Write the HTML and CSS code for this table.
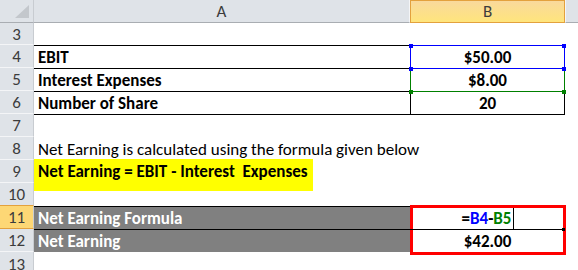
FILE: index.html
```html
<!DOCTYPE html>
<html>
<head>
<meta charset="utf-8">
<link rel="stylesheet" href="styles.css">
</head>
<body>
<div class="sheet">
  <div class="corner"><span class="tri"></span></div>
  <div class="colhead">A</div>
  <div class="colhead selcol">B</div>
  <div class="colhead lastcol"></div>

  <div class="rh">3</div><div class="c"></div><div class="c"></div><div class="c"></div>

  <div class="rh">4</div>
  <div class="c b tb">EBIT</div>
  <div class="c b ctr tb blue">$50.00
    <span class="hd hb tl"></span><span class="hd hb tr"></span>
  </div>
  <div class="c"></div>

  <div class="rh">5</div>
  <div class="c b tb">Interest Expenses</div>
  <div class="c b ctr green">$8.00
    <span class="hd hb tl"></span><span class="hd hb tr"></span>
  </div>
  <div class="c"></div>

  <div class="rh">6</div>
  <div class="c b tb">Number of Share</div>
  <div class="c b ctr greentop side">20
    <span class="hd hg tl"></span><span class="hd hg tr"></span>
  </div>
  <div class="c"></div>

  <div class="rh">7</div>
  <div class="c tb"></div>
  <div class="c tb"></div>
  <div class="c"></div>

  <div class="rh">8</div>
  <div class="c">Net Earning is calculated using the formula given below</div>
  <div class="c"></div>
  <div class="c"></div>

  <div class="rh">9</div>
  <div class="c"><div class="note">Net Earning = EBIT - Interest&nbsp; Expenses</div></div>
  <div class="c"></div>
  <div class="c"></div>

  <div class="rh">10</div>
  <div class="c"></div>
  <div class="c"></div>
  <div class="c"></div>

  <div class="rh selrow">11</div>
  <div class="c b gray tb">Net Earning Formula</div>
  <div class="c b ctr formula">=<span class="ref1">B4</span>-<span class="ref2">B5</span><span class="caret"></span>
    <span class="redbox"></span>
  </div>
  <div class="c"></div>

  <div class="rh">12</div>
  <div class="c b gray tb">Net Earning</div>
  <div class="c b ctr result">$42.00<span class="hd hk mr"></span></div>
  <div class="c"></div>

  <div class="rh">13</div>
  <div class="c"></div>
  <div class="c"></div>
  <div class="c"></div>
</div>
</body>
</html>
```

FILE: styles.css
```css
body {
  margin: 0;
  background: #ffffff;
  font-family: Carlito, Calibri, "Liberation Sans", sans-serif;
  font-size: 17px;
  color: #000;
}

.sheet {
  display: grid;
  grid-template-columns: 34px 376px 155px 13px;
  grid-template-rows: 23px 22px repeat(9, 23px) 25px;
  width: 578px;
  height: 270px;
  overflow: hidden;
}

.corner {
  box-sizing: border-box;
  background: #dfe3e8;
  border-right: 1px solid #c8ccd1;
  border-bottom: 1px solid #a9adb2;
  position: relative;
}

.tri {
  position: absolute;
  left: 15px;
  top: 5px;
  width: 14px;
  height: 13px;
  background: #c3c7cc;
  clip-path: polygon(100% 0, 100% 100%, 0 100%);
}

.colhead {
  box-sizing: border-box;
  background: #dfe3e8;
  border-right: 1px solid #f4f5f7;
  border-bottom: 1px solid #a9adb2;
  display: flex;
  align-items: center;
  justify-content: center;
  color: #3c3c3c;
  font-size: 17px;
}

.colhead.selcol {
  background: linear-gradient(#f9d99c, #ffe57c);
  border: 1px solid #e3a13d;
  color: #3c3c3c;
}

.colhead.lastcol {
  border-left: 1px solid #f4f5f7;
  border-right: none;
}

.rh {
  box-sizing: border-box;
  background: #dfe3e8;
  border-right: 1px solid #c8ccd1;
  border-bottom: 1px solid #f4f5f7;
  display: flex;
  align-items: center;
  justify-content: center;
  color: #3c3c3c;
  font-size: 17px;
  padding-top: 1px;
}

.rh.selrow {
  background: #fdd775;
  border-top: 1px solid #e3a13d;
  border-bottom: 1px solid #e3a13d;
  margin-top: -1px;
}

.c {
  box-sizing: border-box;
  display: flex;
  align-items: center;
  padding-left: 4px;
  padding-top: 1px;
  white-space: nowrap;
  position: relative;
}

.b { font-weight: bold; }

.ctr {
  justify-content: center;
  padding-left: 0;
}

.tb { border-top: 1px solid #000; }

.blue {
  border-top: 1px solid #0000ff;
  border-left: 1px solid #0000ff;
  border-right: 1px solid #0000ff;
}

.green {
  border-top: 1px solid #0000ff;
  border-left: 1px solid #008000;
  border-right: 1px solid #008000;
}

.greentop {
  border-top: 1px solid #008000;
}

.side {
  border-left: 1px solid #000;
  border-right: 1px solid #000;
}

.hd {
  position: absolute;
  width: 4px;
  height: 4px;
}

.hb { background: #0000ff; }
.hg { background: #008000; }
.hk { background: #000; }

.hd.tl { left: -2px; top: -2px; }
.hd.tr { right: -2px; top: -2px; }
.hd.mr { right: 0; top: -2px; width: 3px; height: 3px; }

.note {
  background: #ffff00;
  font-weight: bold;
  width: 279px;
  height: 32px;
  margin-left: -4px;
  margin-top: -2px;
  padding-left: 4px;
  line-height: 26px;
  box-sizing: border-box;
  align-self: flex-start;
}

.gray {
  background: #808080;
  color: #ffffff;
}

.formula { border-top: 1px solid #000; }
.result { border-top: 1px solid #000; }

.ref1 { color: #0000ff; }
.ref2 { color: #008000; }

.caret {
  display: inline-block;
  width: 1px;
  height: 21px;
  background: #000;
  margin-left: 1px;
}

.redbox {
  position: absolute;
  left: 0;
  top: -2px;
  width: 156px;
  height: 50px;
  box-sizing: border-box;
  border: 3px solid #ff0000;
  pointer-events: none;
}
```
